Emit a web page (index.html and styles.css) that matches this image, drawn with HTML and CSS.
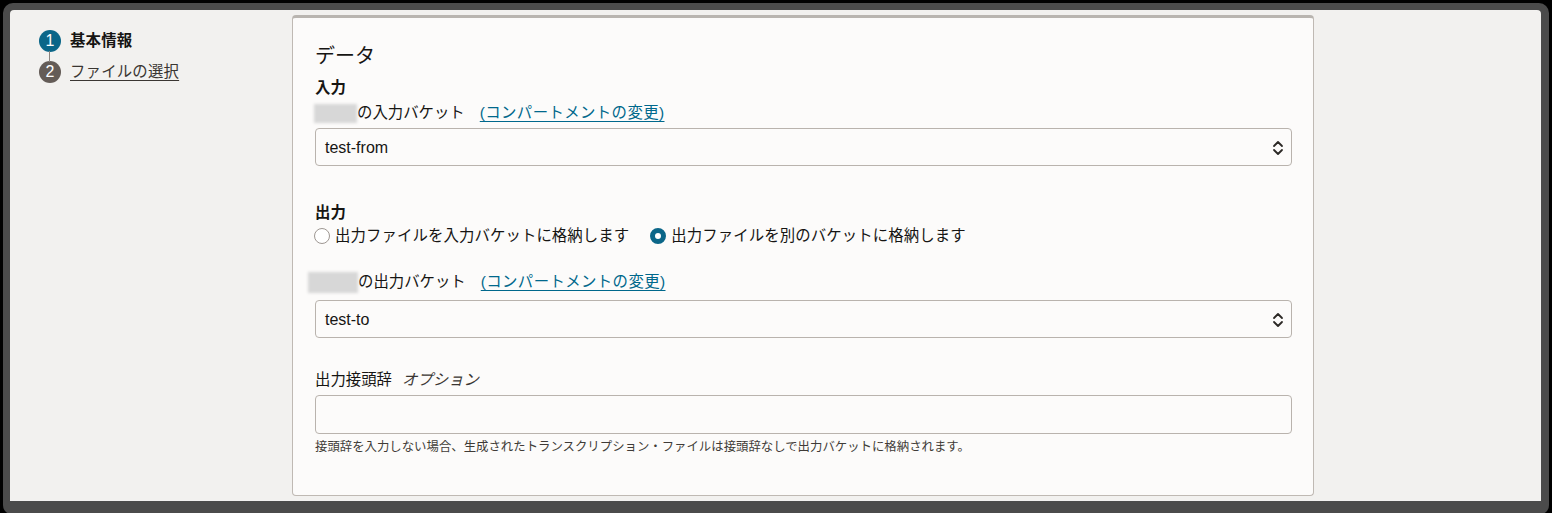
FILE: index.html
```html
<!DOCTYPE html>
<html lang="ja">
<head>
  <meta charset="UTF-8">
  <meta name="viewport" content="width=device-width, initial-scale=1.0">
  <title>ジョブの作成</title>
  <link rel="stylesheet" href="styles.css">
</head>

<body>
  <div class="frame">
    <div class="page">

      <!-- Wizard steps -->
      <ol class="steps">
        <li class="step current"><span class="num">1</span><span class="step-label">基本情報</span></li>
        <li class="step"><span class="num">2</span><a class="step-label" href="#">ファイルの選択</a></li>
      </ol>

      <!-- Data section -->
      <section class="card">
        <h2>データ</h2>

        <h3 class="group-title">入力</h3>
        <div class="field-label">
          <span class="blur"></span><span>の入力バケット</span>
          <a href="#" class="change">(コンパートメントの変更)</a>
        </div>
        <div class="select">
          <span>test-from</span>
          <svg class="chev" width="12" height="20" viewBox="0 0 12 20">
            <polyline points="2,8 6,4 10,8" />
            <polyline points="2,12 6,16 10,12" />
          </svg>
        </div>

        <h3 class="group-title out">出力</h3>
        <div class="radios">
          <label class="radio"><span class="dot"></span>出力ファイルを入力バケットに格納します</label>
          <label class="radio checked"><span class="dot"></span>出力ファイルを別のバケットに格納します</label>
        </div>

        <div class="field-label second">
          <span class="blur wide"></span><span>の出力バケット</span>
          <a href="#" class="change">(コンパートメントの変更)</a>
        </div>
        <div class="select second">
          <span>test-to</span>
          <svg class="chev" width="12" height="20" viewBox="0 0 12 20">
            <polyline points="2,8 6,4 10,8" />
            <polyline points="2,12 6,16 10,12" />
          </svg>
        </div>

        <div class="field-label prefix">
          <span>出力接頭辞</span>
          <em class="optional">オプション</em>
        </div>
        <div class="text-input"></div>
        <p class="help">接頭辞を入力しない場合、生成されたトランスクリプション・ファイルは接頭辞なしで出力バケットに格納されます。</p>
      </section>

    </div>
  </div>
</body>

</html>
```

FILE: styles.css
```css
* {
    box-sizing: border-box;
}
body {
    margin: 0;
    background-color: #000;
    font-family: "Liberation Sans", "Noto Sans CJK JP", sans-serif;
    color: #161513;
}
.frame {
    margin: 3px 3px 0 3px;
    height: 512px;
    padding: 7px 8px 0 7px;
    background-color: #4b4b4b;
    border-radius: 10px;
}
.page {
    display: flex;
    height: 491px;
    background-color: #f2f1ef;
    border-radius: 4px 4px 0 0;
}

/* Steps */
.steps {
    list-style: none;
    margin: 0;
    padding: 20px 0 0 29px;
    width: 282px;
    flex-shrink: 0;
}
.step {
    display: flex;
    align-items: center;
    gap: 9px;
    height: 22px;
    position: relative;
}
.step + .step {
    margin-top: 9px;
}
.step + .step::before {
    content: "";
    position: absolute;
    left: 10px;
    top: -10px;
    width: 1px;
    height: 11px;
    background-color: #8a837e;
}
.num {
    width: 22px;
    height: 22px;
    border-radius: 50%;
    background-color: #645c57;
    color: #fff;
    font-size: 16px;
    display: flex;
    align-items: center;
    justify-content: center;
}
.current .num {
    background-color: #0b6688;
}
.step-label {
    font-size: 15.4px;
    letter-spacing: 0.2px;
    line-height: 20px;
    color: #161513;
}
.current .step-label {
    font-weight: bold;
}
a.step-label {
    color: #3a3632;
    text-decoration: underline;
    text-underline-offset: 3px;
}

/* Card */
.card {
    margin-top: 5px;
    width: 1022px;
    height: 481px;
    padding: 24px 22px 0 22px;
    background-color: #fcfbfa;
    border: 1px solid #bfb9b3;
    border-top: 3px solid #b9b5b0;
    border-radius: 4px;
}
h2 {
    margin: 0;
    font-size: 20px;
    font-weight: normal;
    line-height: 28px;
}
.group-title {
    margin: 7px 0 0 0;
    font-size: 15.4px;
    line-height: 22px;
}
.group-title.out {
    margin-top: 36px;
}
.field-label {
    display: flex;
    align-items: center;
    margin-top: 3px;
    font-size: 15.4px;
    line-height: 22px;
}
.field-label.second {
    margin-top: 24px;
}
.field-label.prefix {
    margin-top: 31px;
}
.blur {
    width: 43px;
    height: 19px;
    margin-left: -1px;
    background-color: #d7d7d7;
    filter: blur(1.5px);
}
.blur.wide {
    width: 50px;
    height: 21px;
    margin-left: -7px;
}
.change {
    margin-left: 15px;
    color: #00688c;
    letter-spacing: 0.4px;
    text-decoration: underline;
    text-underline-offset: 3px;
}
.optional {
    margin-left: 10px;
    font-style: italic;
    color: #3a3632;
}

/* Select and input */
.select {
    display: flex;
    align-items: center;
    justify-content: space-between;
    margin-top: 4px;
    height: 38px;
    width: 977px;
    padding: 1px 7px 0 9px;
    border: 1px solid #b9b3ad;
    border-radius: 4px;
    background-color: #fcfbfa;
    font-size: 16px;
}
.select.second {
    margin-top: 7px;
}
.chev polyline {
    fill: none;
    stroke: #2b2825;
    stroke-width: 1.8;
    stroke-linecap: round;
    stroke-linejoin: round;
}
.text-input {
    margin-top: 4px;
    height: 39px;
    width: 977px;
    border: 1px solid #b9b3ad;
    border-radius: 4px;
    background-color: #fcfbfa;
}
.help {
    margin: 4px 0 0 0;
    font-size: 12.4px;
    line-height: 18px;
    color: #3f3b37;
}

/* Radios */
.radios {
    display: flex;
    gap: 22px;
    margin-top: 1px;
    font-size: 15.4px;
    line-height: 22px;
}
.radio {
    display: flex;
    align-items: center;
    gap: 5px;
    letter-spacing: 0.1px;
}
.dot {
    width: 16px;
    height: 16px;
    margin-left: -1px;
    border-radius: 50%;
    border: 1px solid #9e9792;
    background-color: #fff;
}
.checked .dot {
    border: 5px solid #0b6688;
    background-color: #fff;
}
```
